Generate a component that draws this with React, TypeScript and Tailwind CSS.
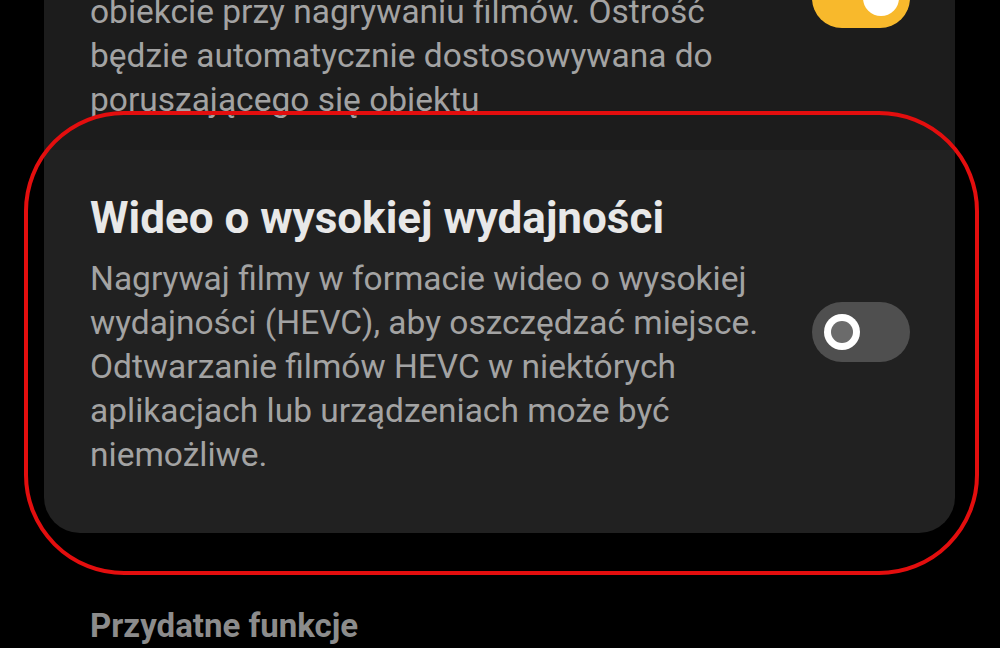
export default function App() {
  return (
    <div
      className="relative w-[1000px] h-[648px] overflow-hidden bg-black"
      style={{ fontFamily: "Roboto, 'Noto Sans', sans-serif" }}
    >
      <div className="mx-[44px] mt-[-60px] w-[911px] rounded-b-[36px] overflow-hidden">
        {/* previous item */}
        <div className="flex items-start justify-between bg-[#1c1c1c] pl-[46px] pr-[45px] pb-[28px]">
          <div className="pt-[50px] text-[33.5px] leading-[44px] text-[#a3a3a3]">
            <div className="whitespace-nowrap">obiekcie przy nagrywaniu filmów. Ostrość</div>
            <div className="whitespace-nowrap">będzie automatycznie dostosowywana do</div>
            <div className="whitespace-nowrap">poruszającego się obiektu</div>
          </div>
          <div className="mt-[28px] flex h-[60px] w-[98px] items-center justify-end rounded-full bg-[#f8b92c] pr-[11px]">
            <div className="h-[36px] w-[36px] rounded-full bg-white" />
          </div>
        </div>
        {/* highlighted item */}
        <div className="flex items-center justify-between bg-[#212121] pl-[46px] pr-[45px] pt-[42px] pb-[56px]">
          <div>
            <div className="whitespace-nowrap text-[44px] font-bold leading-[52px] text-[#e8e8e8]">
              Wideo o wysokiej wydajności
            </div>
            <div className="mt-[13px] text-[33.5px] leading-[44px] text-[#a3a3a3]">
              <div className="whitespace-nowrap">Nagrywaj filmy w formacie wideo o wysokiej</div>
              <div className="whitespace-nowrap">wydajności (HEVC), aby oszczędzać miejsce.</div>
              <div className="whitespace-nowrap">Odtwarzanie filmów HEVC w niektórych</div>
              <div className="whitespace-nowrap">aplikacjach lub urządzeniach może być</div>
              <div className="whitespace-nowrap">niemożliwe.</div>
            </div>
          </div>
          <div className="mb-[6px] flex h-[60px] w-[98px] shrink-0 items-center rounded-full bg-[#4f4f4f] pl-[12px]">
            <div className="flex h-[36px] w-[36px] items-center justify-center rounded-full bg-white">
              <div className="h-[22px] w-[22px] rounded-full bg-[#6b6b6b]" />
            </div>
          </div>
        </div>
      </div>
      <div className="ml-[90px] mt-[73px] whitespace-nowrap text-[33px] font-bold leading-[40px] text-[#8c8c8c]">
        Przydatne funkcje
      </div>
      {/* red annotation outline */}
      <div className="pointer-events-none absolute left-[24px] top-[111px] h-[464px] w-[955px] rounded-[100px] border-[4px] border-[#e30e0e]" />
    </div>
  );
}
